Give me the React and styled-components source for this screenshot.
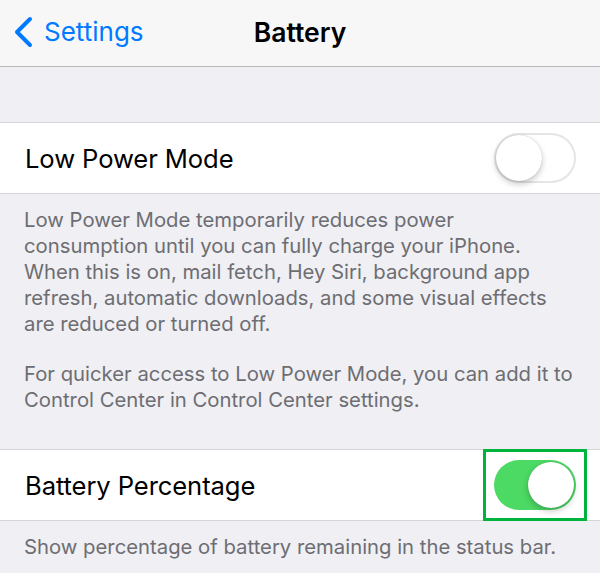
import React from 'react';
import styled, { createGlobalStyle } from 'styled-components';

const GlobalStyle = createGlobalStyle`
  html, body {
    margin: 0;
    padding: 0;
    background: #efeff4;
    font-family: Inter, "Noto Sans", "Liberation Sans", sans-serif;
    -webkit-font-smoothing: antialiased;
  }
`;

const Page = styled.div`
  width: 600px;
  height: 573px;
  overflow: hidden;
  background: #efeff4;
`;

const NavBar = styled.div`
  height: 66px;
  background: #f7f7f8;
  border-bottom: 1px solid #b7b7ba;
  display: grid;
  grid-template-columns: 1fr auto 1fr;
  align-items: center;
`;

const BackButton = styled.div`
  display: flex;
  align-items: center;
  gap: 11px;
  padding-left: 13px;
  padding-bottom: 3px;
  color: #007aff;
  font-size: 26px;
`;

const NavTitle = styled.div`
  font-size: 26.5px;
  font-weight: 600;
  color: #000;
  padding-bottom: 3px;
`;

const Spacer = styled.div`
  height: 55px;
`;

const Group = styled.div`
  background: #fff;
  border-top: 1px solid #d6d6da;
  border-bottom: 1px solid #d6d6da;
`;

const Row = styled.div`
  height: 70px;
  display: flex;
  align-items: center;
  justify-content: space-between;
  padding: 0 24px 0 25px;
`;

const Label = styled.div`
  font-size: 25.6px;
  color: #000;
  letter-spacing: -0.1px;
`;

const Footer = styled.div`
  padding: ${p => p.$pad || '13px 20px 36px 24px'};
  color: #6d6d72;
  font-size: 20.3px;
  line-height: 26px;

  p {
    margin: 0;
    white-space: nowrap;
  }
  p + p {
    margin-top: 24px;
  }
`;

const Highlight = styled.div`
  margin-right: -11px;
  padding: 8px 8px;
  border: 3.5px solid #00b33c;
  display: flex;
`;

const Track = styled.div`
  position: relative;
  width: 82px;
  height: 50px;
  box-sizing: border-box;
  border-radius: 25px;
  background: ${p => (p.$on ? '#4cd964' : '#fff')};
  border: ${p => (p.$on ? 'none' : '2px solid #e5e5e5')};
`;

const Knob = styled.div`
  position: absolute;
  top: ${p => (p.$on ? '2px' : '0')};
  left: ${p => (p.$on ? '34px' : '0')};
  width: 46px;
  height: 46px;
  border-radius: 50%;
  background: #fff;
  box-shadow: 0 3px 6px rgba(0, 0, 0, 0.22), 0 0 1px rgba(0, 0, 0, 0.25);
`;

const Toggle = ({ on }) => (
  <Track $on={on}>
    <Knob $on={on} />
  </Track>
);

const Chevron = () => (
  <svg width="20" height="32" viewBox="0 0 20 32">
    <path d="M17 3 L4 16 L17 29" fill="none" stroke="#007aff" strokeWidth="4" strokeLinecap="round" strokeLinejoin="round" />
  </svg>
);

export default function App() {
  return (
    <Page>
      <GlobalStyle />
      <NavBar>
        <BackButton>
          <Chevron />
          Settings
        </BackButton>
        <NavTitle>Battery</NavTitle>
        <div />
      </NavBar>
      <Spacer />
      <Group>
        <Row>
          <Label>Low Power Mode</Label>
          <Toggle on={false} />
        </Row>
      </Group>
      <Footer>
        <p>
          Low Power Mode temporarily reduces power<br />
          consumption until you can fully charge your iPhone.<br />
          When this is on, mail fetch, Hey Siri, background app<br />
          refresh, automatic downloads, and some visual effects<br />
          are reduced or turned off.
        </p>
        <p>
          For quicker access to Low Power Mode, you can add it to<br />
          Control Center in Control Center settings.
        </p>
      </Footer>
      <Group>
        <Row>
          <Label>Battery Percentage</Label>
          <Highlight>
            <Toggle on />
          </Highlight>
        </Row>
      </Group>
      <Footer $pad="13px 24px">
        <p>Show percentage of battery remaining in the status bar.</p>
      </Footer>
    </Page>
  );
}
